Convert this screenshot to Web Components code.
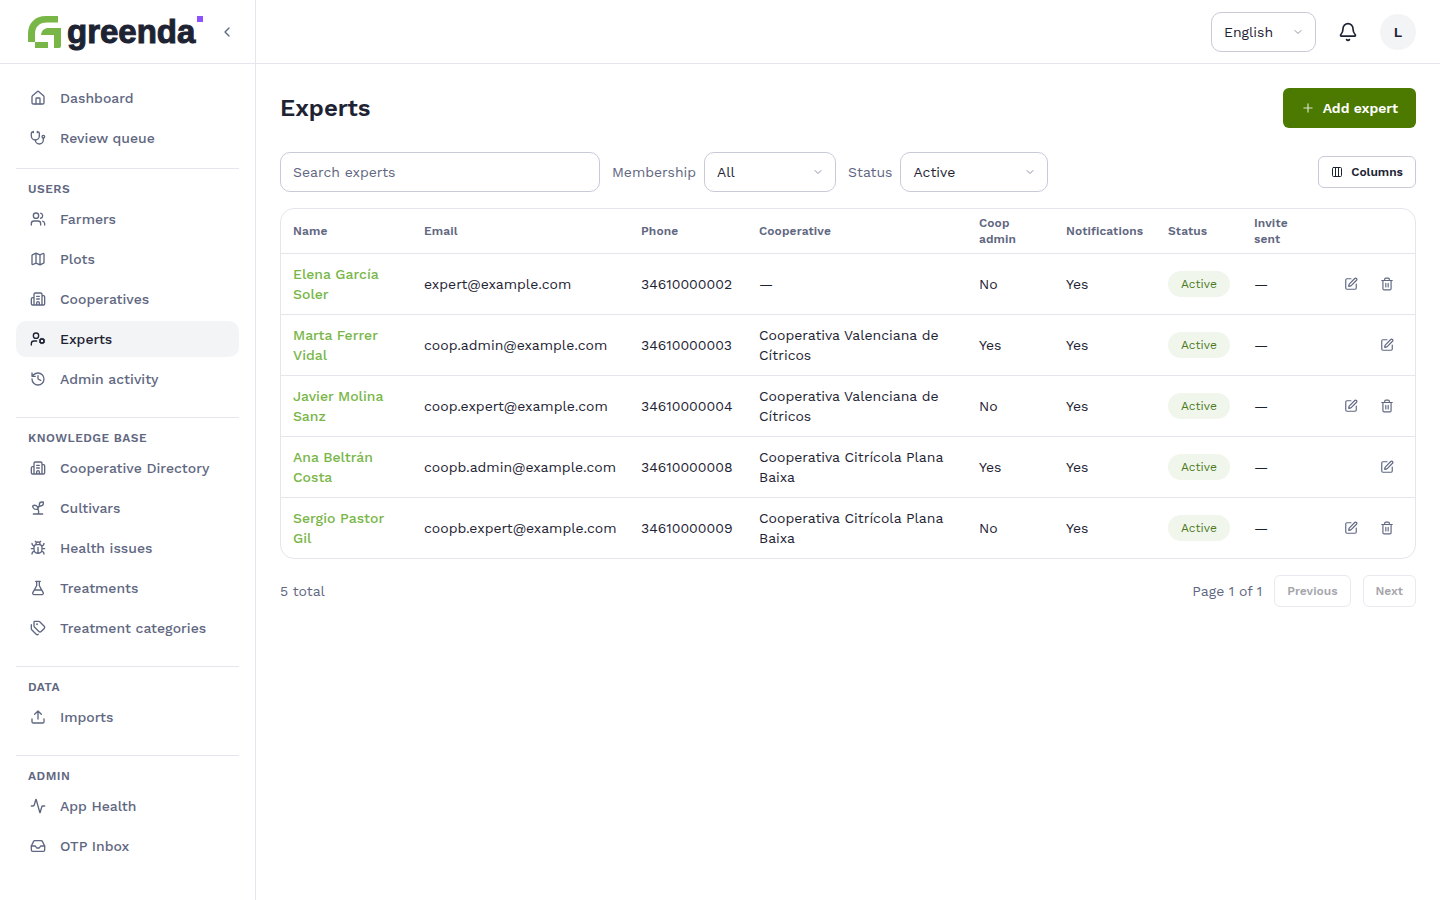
<!DOCTYPE html>
<html lang="en">
<head>
<meta charset="utf-8">
<meta name="viewport" content="width=device-width, initial-scale=1">
<title>Experts - greenda</title>
<style>
  :root {
    --text: #1e2333;
    --muted: #5f6781;
    --line: #e5e6eb;
    --field: #c9cad8;
    --soft: #f3f4f6;
    --brand: #78b647;
    --primary: #4c7a00;
  }
  body {
    margin: 0;
    background: #fff;
    color: var(--text);
    font-family: "Work Sans", Inter, "Noto Sans", sans-serif;
    font-size: 14px;
    line-height: 20px;
  }
</style>
</head>
<body>
<app-shell>
  <side-nav slot="nav">
    <nav-group>
      <nav-item icon="house">Dashboard</nav-item>
      <nav-item icon="stethoscope">Review queue</nav-item>
    </nav-group>
    <nav-group label="Users">
      <nav-item icon="users">Farmers</nav-item>
      <nav-item icon="map">Plots</nav-item>
      <nav-item icon="building">Cooperatives</nav-item>
      <nav-item icon="usercog" active>Experts</nav-item>
      <nav-item icon="history">Admin activity</nav-item>
    </nav-group>
    <nav-group label="Knowledge base">
      <nav-item icon="building">Cooperative Directory</nav-item>
      <nav-item icon="sprout">Cultivars</nav-item>
      <nav-item icon="bug">Health issues</nav-item>
      <nav-item icon="flask">Treatments</nav-item>
      <nav-item icon="tags">Treatment categories</nav-item>
    </nav-group>
    <nav-group label="Data">
      <nav-item icon="upload">Imports</nav-item>
    </nav-group>
    <nav-group label="Admin">
      <nav-item icon="activity">App Health</nav-item>
      <nav-item icon="inbox">OTP Inbox</nav-item>
    </nav-group>
  </side-nav>
  <top-bar slot="top"></top-bar>
  <experts-page></experts-page>
</app-shell>

<script>
// 24x24 stroke icons
const icons = {
  house: '<path d="M15 21v-8a1 1 0 0 0-1-1h-4a1 1 0 0 0-1 1v8"/><path d="M3 10a2 2 0 0 1 .709-1.528l7-6a2 2 0 0 1 2.582 0l7 6A2 2 0 0 1 21 10v9a2 2 0 0 1-2 2H5a2 2 0 0 1-2-2z"/>',
  stethoscope: '<path d="M11 2v2M5 2v2M5 3H4a2 2 0 0 0-2 2v4a6 6 0 0 0 12 0V5a2 2 0 0 0-2-2h-1"/><path d="M8 15a6 6 0 0 0 12 0v-3"/><circle cx="20" cy="10" r="2"/>',
  users: '<path d="M16 21v-2a4 4 0 0 0-4-4H6a4 4 0 0 0-4 4v2M16 3.128a4 4 0 0 1 0 7.744M22 21v-2a4 4 0 0 0-3-3.87"/><circle cx="9" cy="7" r="4"/>',
  map: '<path d="M14.106 5.553a2 2 0 0 0 1.788 0l3.659-1.83A1 1 0 0 1 21 4.619v12.764a1 1 0 0 1-.553.894l-4.553 2.277a2 2 0 0 1-1.788 0l-4.212-2.106a2 2 0 0 0-1.788 0l-3.659 1.83A1 1 0 0 1 3 19.381V6.618a1 1 0 0 1 .553-.894l4.553-2.277a2 2 0 0 1 1.788 0zM15 5.764v15M9 3.236v15"/>',
  building: '<path d="M10 12h4M10 8h4M14 21v-3a2 2 0 0 0-4 0v3M6 10H4a2 2 0 0 0-2 2v7a2 2 0 0 0 2 2h16a2 2 0 0 0 2-2V9a2 2 0 0 0-2-2h-2M6 21V5a2 2 0 0 1 2-2h8a2 2 0 0 1 2 2v16"/>',
  usercog: '<path d="M10 15H6a4 4 0 0 0-4 4v2m12.305-4.47.923-.382m0-2.296-.923-.383m2.547-1.241-.383-.923m.383 6.467-.383.924m2.679-6.468.383-.923m-.001 7.391-.382-.924m1.624-3.92.924-.383m-.924 2.679.924.383"/><circle cx="18" cy="15" r="3"/><circle cx="9" cy="7" r="4"/>',
  history: '<path d="M3 12a9 9 0 1 0 9-9 9.75 9.75 0 0 0-6.74 2.74L3 8M3 3v5h5M12 7v5l4 2"/>',
  sprout: '<path d="M14 9.536V7a4 4 0 0 1 4-4h1.5a.5.5 0 0 1 .5.5V5a4 4 0 0 1-4 4 4 4 0 0 0-4 4c0 2 1 3 1 5a5 5 0 0 1-1 3M4 9a5 5 0 0 1 8 4 5 5 0 0 1-8-4M5 21h14"/>',
  bug: '<path d="M12 20v-9M14 7a4 4 0 0 1 4 4v3a6 6 0 0 1-12 0v-3a4 4 0 0 1 4-4zM14.12 3.88 16 2M21 21a4 4 0 0 0-3.81-4M21 5a4 4 0 0 1-3.55 3.97M22 13h-4M3 21a4 4 0 0 1 3.81-4M3 5a4 4 0 0 0 3.55 3.97M6 13H2M8 2l1.88 1.88M9 7.13V6a3 3 0 1 1 6 0v1.13"/>',
  flask: '<path d="M14 2v6a2 2 0 0 0 .245.96l5.51 10.08A2 2 0 0 1 18 22H6a2 2 0 0 1-1.755-2.96l5.51-10.08A2 2 0 0 0 10 8V2M6.453 15h11.094M8.5 2h7"/>',
  tags: '<path d="M13.172 2a2 2 0 0 1 1.414.586l6.71 6.71a2.4 2.4 0 0 1 0 3.408l-4.592 4.592a2.4 2.4 0 0 1-3.408 0l-6.71-6.71A2 2 0 0 1 6 9.172V3a1 1 0 0 1 1-1z"/><path d="M2 7v6.172a2 2 0 0 0 .586 1.414l6.71 6.71a2.4 2.4 0 0 0 3.191.193"/><circle cx="10.5" cy="6.5" r=".5" fill="currentColor"/>',
  upload: '<path d="M12 3v12M17 8l-5-5-5 5M21 15v4a2 2 0 0 1-2 2H5a2 2 0 0 1-2-2v-4"/>',
  activity: '<path d="M22 12h-2.48a2 2 0 0 0-1.93 1.46l-2.35 8.36a.25.25 0 0 1-.48 0L9.24 2.18a.25.25 0 0 0-.48 0l-2.35 8.36A2 2 0 0 1 4.49 12H2"/>',
  inbox: '<path d="M22 12h-6l-2 3h-4l-2-3H2"/><path d="M5.45 5.11 2 12v6a2 2 0 0 0 2 2h16a2 2 0 0 0 2-2v-6l-3.45-6.89A2 2 0 0 0 16.76 4H7.24a2 2 0 0 0-1.79 1.11z"/>',
  bell: '<path d="M10.268 21a2 2 0 0 0 3.464 0M3.262 15.326A1 1 0 0 0 4 17h16a1 1 0 0 0 .74-1.673C19.41 13.956 18 12.499 18 8A6 6 0 0 0 6 8c0 4.499-1.411 5.956-2.738 7.326"/>',
  edit: '<path d="M12 3H5a2 2 0 0 0-2 2v14a2 2 0 0 0 2 2h14a2 2 0 0 0 2-2v-7"/><path d="M18.375 2.625a1 1 0 0 1 3 3l-9.013 9.014a2 2 0 0 1-.853.505l-2.873.84a.5.5 0 0 1-.62-.62l.84-2.873a2 2 0 0 1 .506-.852z"/>',
  trash: '<path d="M10 11v6M14 11v6M19 6v14a2 2 0 0 1-2 2H7a2 2 0 0 1-2-2V6M3 6h18M8 6V4a2 2 0 0 1 2-2h4a2 2 0 0 1 2 2v2"/>',
  columns: '<rect x="3" y="3" width="18" height="18" rx="2"/><path d="M9 3v18M15 3v18"/>',
  plus: '<path d="M5 12h14M12 5v14"/>',
  down: '<path d="m6 9 6 6 6-6"/>',
  left: '<path d="m15 18-6-6 6-6"/>'
};

// Fill an open shadow root from a template string
function mount(el, html) {
  const template = document.createElement('template');
  template.innerHTML = html;
  const root = el.attachShadow({ mode: 'open' });
  root.appendChild(template.content.cloneNode(true));
  return root;
}

class UiIcon extends HTMLElement {
  connectedCallback() {
    if (this.shadowRoot) return;
    const size = this.getAttribute('size') || 16;
    mount(this, `
      <style>
        :host { display: inline-flex; flex: none; }
        svg { display: block; }
      </style>
      <svg width="${size}" height="${size}" viewBox="0 0 24 24" fill="none" stroke="currentColor"
        stroke-width="2" stroke-linecap="round" stroke-linejoin="round" aria-hidden="true">${icons[this.getAttribute('name')]}</svg>
    `);
  }
}

class AppShell extends HTMLElement {
  constructor() {
    super();
    mount(this, `
      <style>
        :host {
          display: grid;
          grid-template-columns: 256px minmax(0, 1fr);
          min-height: 100vh;
        }
        .content { display: flex; flex-direction: column; }
        main { padding: 24px; }
      </style>
      <slot name="nav"></slot>
      <div class="content">
        <slot name="top"></slot>
        <main><slot></slot></main>
      </div>
    `);
  }
}

class BrandLogo extends HTMLElement {
  constructor() {
    super();
    mount(this, `
      <style>
        :host { display: flex; align-items: center; gap: 6px; }
        svg { display: block; }
        .word {
          font-family: "Liberation Sans", Arial, sans-serif;
          font-size: 33px;
          font-weight: 700;
          line-height: 32px;
          -webkit-text-stroke: 1px currentColor;
        }
        .dot { align-self: flex-start; width: 6px; height: 6px; background: #8c52ff; margin-left: -4px; }
      </style>
      <svg width="33" height="32" viewBox="0 0 33 32" fill="var(--brand)" aria-hidden="true">
        <path d="M30 0v6.500H19C11 6.500 7 11 7 18v8H0V18C0 7 7 0 18 0z"/>
        <path d="M33 12v18q0 2-2 2h-5V19H13c1-5 3-7 8-7zM7 26h13v6H7z"/>
      </svg>
      <span class="word">greenda</span>
      <span class="dot"></span>
    `);
  }
}

class SideNav extends HTMLElement {
  constructor() {
    super();
    mount(this, `
      <style>
        :host { display: block; border-right: 1px solid var(--line); }
        header {
          display: flex;
          align-items: center;
          justify-content: space-between;
          box-sizing: border-box;
          height: 64px;
          padding: 0 16px 0 28px;
          border-bottom: 1px solid var(--line);
        }
        button {
          display: grid;
          place-items: center;
          width: 24px;
          height: 24px;
          padding: 0;
          border: 0;
          background: none;
          color: var(--muted);
        }
        nav { padding: 16px; }
      </style>
      <header>
        <brand-logo></brand-logo>
        <button aria-label="Collapse sidebar"><ui-icon name="left" size="16"></ui-icon></button>
      </header>
      <nav><slot></slot></nav>
    `);
  }
}

class NavGroup extends HTMLElement {
  constructor() {
    super();
    const label = this.getAttribute('label');
    mount(this, `
      <style>
        :host { display: flex; flex-direction: column; gap: 4px; margin-bottom: 20px; }
        :host(:first-child) { margin-bottom: 12px; }
        h2 {
          margin: 0;
          padding: 12px 12px 0;
          border-top: 1px solid var(--line);
          color: var(--muted);
          font-size: 12px;
          font-weight: 600;
          line-height: 16px;
          letter-spacing: 0.04em;
          text-transform: uppercase;
        }
      </style>
      ${label ? `<h2>${label}</h2>` : ''}
      <slot></slot>
    `);
  }
}

class NavItem extends HTMLElement {
  constructor() {
    super();
    mount(this, `
      <style>
        :host { display: block; }
        a {
          display: flex;
          align-items: center;
          gap: 12px;
          padding: 8px 12px;
          border-radius: 10px;
          color: var(--muted);
          font-weight: 500;
          text-decoration: none;
        }
        :host([active]) a { background: var(--soft); color: var(--text); }
        ui-icon { width: 20px; justify-content: center; }
      </style>
      <a href="#"><ui-icon name="${this.getAttribute('icon')}"></ui-icon><span><slot></slot></span></a>
    `);
  }
}

class SelectField extends HTMLElement {
  constructor() {
    super();
    const label = this.getAttribute('label');
    const value = this.getAttribute('value');
    mount(this, `
      <style>
        :host { display: flex; align-items: center; gap: 8px; }
        label { color: var(--muted); }
        .field { display: grid; align-items: center; width: var(--field-width, 132px); }
        .field > * { grid-area: 1 / 1; }
        select {
          appearance: none;
          width: 100%;
          height: 40px;
          padding: 0 32px 0 12px;
          border: 1px solid var(--field);
          border-radius: 10px;
          background: #fff;
          color: var(--text);
          font: inherit;
        }
        ui-icon { justify-self: end; margin-right: 12px; color: var(--muted); opacity: 0.7; pointer-events: none; }
      </style>
      ${label ? `<label for="select">${label}</label>` : ''}
      <div class="field">
        <select id="select" ${label ? '' : 'aria-label="Language"'}><option>${value}</option></select>
        <ui-icon name="down" size="12"></ui-icon>
      </div>
    `);
  }
}

class TopBar extends HTMLElement {
  constructor() {
    super();
    mount(this, `
      <style>
        :host {
          display: flex;
          align-items: center;
          justify-content: flex-end;
          gap: 12px;
          box-sizing: border-box;
          height: 64px;
          padding: 0 24px;
          border-bottom: 1px solid var(--line);
        }
        select-field { --field-width: 105px; }
        button {
          display: grid;
          place-items: center;
          height: 36px;
          padding: 0;
          border: 0;
          color: var(--text);
          font: inherit;
          font-weight: 600;
        }
        .bell { width: 40px; background: none; }
        .avatar { width: 36px; border-radius: 50%; background: var(--soft); }
      </style>
      <select-field value="English"></select-field>
      <button class="bell" aria-label="Notifications"><ui-icon name="bell" size="20"></ui-icon></button>
      <button class="avatar">L</button>
    `);
  }
}

class UiButton extends HTMLElement {
  constructor() {
    super();
    const icon = this.getAttribute('icon');
    const primary = this.hasAttribute('primary');
    mount(this, `
      <style>
        :host { display: block; }
        button {
          display: flex;
          align-items: center;
          gap: 8px;
          height: 32px;
          padding: 0 12px;
          border: 1px solid var(--field);
          border-radius: 6px;
          background: #fff;
          color: var(--text);
          font: inherit;
          font-size: 12px;
          font-weight: 600;
          white-space: nowrap;
        }
        button:disabled { opacity: 0.4; }
        :host([primary]) button {
          height: 40px;
          padding: 0 18px;
          border: 0;
          background: var(--primary);
          color: #fff;
          font-size: 14px;
        }
        :host([primary]) ui-icon { opacity: 0.8; }
      </style>
      <button ${this.hasAttribute('disabled') ? 'disabled' : ''}>
        ${icon ? `<ui-icon name="${icon}" size="${primary ? 14 : 12}"></ui-icon>` : ''}
        <span><slot></slot></span>
      </button>
    `);
  }
}

class StatusBadge extends HTMLElement {
  constructor() {
    super();
    mount(this, `
      <style>
        :host {
          display: inline-block;
          padding: 5px 13px;
          border-radius: 13px;
          background: #f1f6ec;
          color: #4c7a1e;
          font-size: 12px;
          font-weight: 400;
          line-height: 16px;
          vertical-align: middle;
        }
      </style>
      <slot></slot>
    `);
  }
}

const experts = [
  { name: 'Elena García Soler', email: 'expert@example.com', phone: '34610000002', coop: '—', admin: false },
  { name: 'Marta Ferrer Vidal', email: 'coop.admin@example.com', phone: '34610000003', coop: 'Cooperativa Valenciana de Cítricos', admin: true },
  { name: 'Javier Molina Sanz', email: 'coop.expert@example.com', phone: '34610000004', coop: 'Cooperativa Valenciana de Cítricos', admin: false },
  { name: 'Ana Beltrán Costa', email: 'coopb.admin@example.com', phone: '34610000008', coop: 'Cooperativa Citrícola Plana Baixa', admin: true },
  { name: 'Sergio Pastor Gil', email: 'coopb.expert@example.com', phone: '34610000009', coop: 'Cooperativa Citrícola Plana Baixa', admin: false }
];

class ExpertsTable extends HTMLElement {
  constructor() {
    super();
    const widths = [131, 217, 118, 220, 87, 102, 86, 80, 93];
    const heads = ['Name', 'Email', 'Phone', 'Cooperative', 'Coop admin', 'Notifications', 'Status', 'Invite sent', ''];
    mount(this, `
      <style>
        :host { display: block; overflow-x: auto; border: 1px solid var(--line); border-radius: 14px; }
        table { width: 100%; table-layout: fixed; border-collapse: separate; border-spacing: 0; }
        th, td { text-align: left; vertical-align: middle; border-bottom: 1px solid var(--line); }
        th {
          padding: 6px 12px;
          color: var(--muted);
          font-size: 12px;
          font-weight: 600;
          line-height: 16px;
          letter-spacing: 0.01em;
        }
        td { height: 40px; padding: 10px 12px; }
        tr:last-child td { border-bottom: 0; }
        a { color: var(--brand); font-weight: 500; text-decoration: none; }
        .actions { display: flex; justify-content: flex-end; gap: 4px; }
        .actions button {
          display: grid;
          place-items: center;
          width: 32px;
          height: 32px;
          padding: 0;
          border: 0;
          background: none;
          color: var(--muted);
        }
      </style>
      <table>
        <colgroup>${widths.map(w => `<col style="width: ${w}px">`).join('')}</colgroup>
        <thead><tr>${heads.map(h => h ? `<th scope="col">${h}</th>` : '<th></th>').join('')}</tr></thead>
        <tbody>${experts.map(e => `
          <tr>
            <td><a href="#">${e.name}</a></td>
            <td>${e.email}</td>
            <td>${e.phone}</td>
            <td>${e.coop}</td>
            <td>${e.admin ? 'Yes' : 'No'}</td>
            <td>Yes</td>
            <td><status-badge>Active</status-badge></td>
            <td>—</td>
            <td>
              <div class="actions">
                <button aria-label="Edit ${e.name}"><ui-icon name="edit" size="14"></ui-icon></button>
                ${e.admin ? '' : `<button aria-label="Delete ${e.name}"><ui-icon name="trash" size="14"></ui-icon></button>`}
              </div>
            </td>
          </tr>`).join('')}
        </tbody>
      </table>
    `);
  }
}

class ExpertsPage extends HTMLElement {
  constructor() {
    super();
    mount(this, `
      <style>
        :host { display: flex; flex-direction: column; gap: 16px; }
        .row { display: flex; align-items: center; justify-content: space-between; gap: 12px; }
        .title { margin-bottom: 8px; }
        h1 { margin: 0; font-size: 24px; font-weight: 600; line-height: 32px; }
        .filters { display: flex; align-items: center; gap: 12px; }
        input {
          box-sizing: border-box;
          width: 320px;
          height: 40px;
          padding: 0 12px;
          border: 1px solid var(--field);
          border-radius: 10px;
          color: var(--text);
          font: inherit;
        }
        input::placeholder { color: var(--muted); opacity: 1; }
        .status { --field-width: 148px; }
        .muted { color: var(--muted); }
      </style>
      <div class="row title">
        <h1>Experts</h1>
        <ui-button primary icon="plus">Add expert</ui-button>
      </div>
      <div class="row">
        <div class="filters">
          <input type="search" placeholder="Search experts" aria-label="Search experts">
          <select-field label="Membership" value="All"></select-field>
          <select-field class="status" label="Status" value="Active"></select-field>
        </div>
        <ui-button icon="columns">Columns</ui-button>
      </div>
      <experts-table></experts-table>
      <div class="row muted">
        <span>5 total</span>
        <div class="filters">
          <span>Page 1 of 1</span>
          <ui-button disabled>Previous</ui-button>
          <ui-button disabled>Next</ui-button>
        </div>
      </div>
    `);
  }
}

// Define custom elements
customElements.define('ui-icon', UiIcon);
customElements.define('brand-logo', BrandLogo);
customElements.define('ui-button', UiButton);
customElements.define('status-badge', StatusBadge);
customElements.define('select-field', SelectField);
customElements.define('nav-item', NavItem);
customElements.define('nav-group', NavGroup);
customElements.define('side-nav', SideNav);
customElements.define('top-bar', TopBar);
customElements.define('experts-table', ExpertsTable);
customElements.define('experts-page', ExpertsPage);
customElements.define('app-shell', AppShell);
</script>
</body>
</html>
